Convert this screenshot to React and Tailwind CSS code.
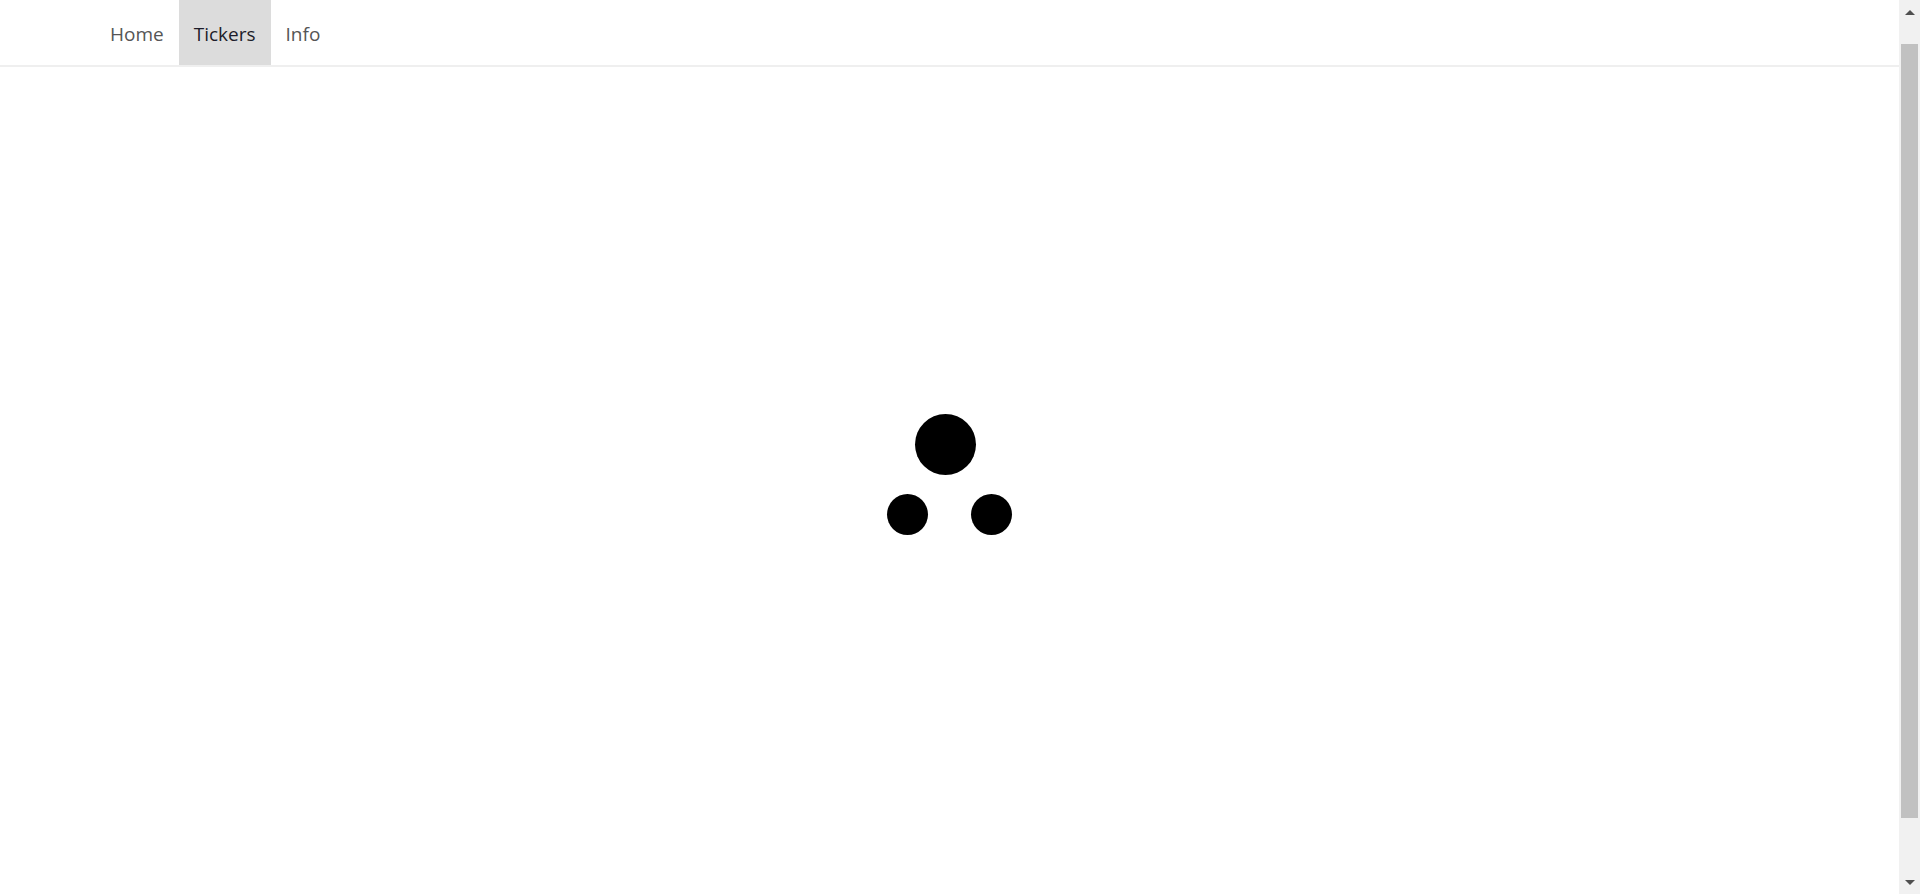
import React from 'react';

const font = { fontFamily: '"Open Sans", "Noto Sans", sans-serif' };

function NavBar() {
  const items = ['Home', 'Tickers', 'Info'];
  return (
    <nav className="flex h-[67px] border-b-2 border-[#efefef] pl-[95px] bg-white">
      {items.map(item => (
        <a
          key={item}
          href="#"
          className={
            item === 'Tickers'
              ? 'flex items-center pt-[3px] px-[15px] h-full text-[19px] bg-[#dcdcdc] text-[#1c1c2a]'
              : 'flex items-center pt-[3px] px-[15px] h-full text-[19px] text-[#555555]'
          }
        >
          {item}
        </a>
      ))}
    </nav>
  );
}

function Spinner() {
  return (
    <div className="flex flex-col mb-[12px] w-[125px]">
      <div className="pl-[28px]">
        <div className="w-[61px] h-[61px] rounded-full bg-black" />
      </div>
      <div className="flex gap-[43px] mt-[19px]">
        <div className="w-[41px] h-[41px] rounded-full bg-black" />
        <div className="w-[41px] h-[41px] rounded-full bg-black" />
      </div>
    </div>
  );
}

function Scrollbar() {
  return (
    <div className="w-[21px] h-full bg-[#f1f1f1] flex flex-col items-center">
      <div className="h-[24px] flex items-center justify-center">
        <div className="w-0 h-0 border-l-[5px] border-r-[5px] border-b-[5px] border-l-transparent border-r-transparent border-b-[#505050]" />
      </div>
      <div className="mt-[20px] w-[17px] h-[774px] bg-[#c1c1c1]" />
      <div className="flex-1" />
      <div className="h-[24px] flex items-center justify-center">
        <div className="w-0 h-0 border-l-[5px] border-r-[5px] border-t-[5px] border-l-transparent border-r-transparent border-t-[#505050]" />
      </div>
    </div>
  );
}

function App() {
  return (
    <div className="flex h-[894px] w-full overflow-hidden bg-white" style={font}>
      <div className="flex-1 flex flex-col">
        <NavBar />
        <main className="flex-1 flex items-center justify-center">
          <Spinner />
        </main>
      </div>
      <Scrollbar />
    </div>
  );
}

export default App;
